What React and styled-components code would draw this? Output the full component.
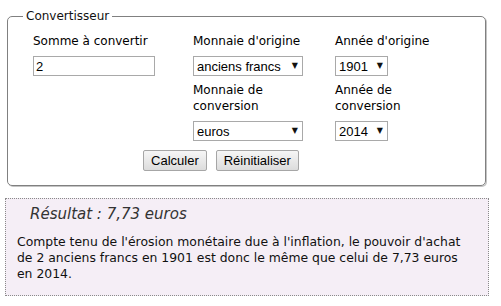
import React, { useState } from "react";
import styled, { createGlobalStyle } from "styled-components";

const GlobalStyle = createGlobalStyle`
  body {
    margin: 0;
    background: #fff;
    font-family: "DejaVu Sans", Verdana, sans-serif;
    font-size: 12px;
    color: #000;
  }
`;

const Page = styled.div`
  width: 484px;
  padding: 8px 0 0 5px;
`;

const Box = styled.fieldset`
  margin: 0 0 0 2px;
  width: 479px;
  box-sizing: border-box;
  border: 1px solid #808080;
  border-radius: 5px;
  box-shadow: 1px 1px 0 #c4c4c4;
  padding: 0 0 14px 15px;
`;

const Legend = styled.legend`
  padding: 0 3px;
  margin-left: 0;
  line-height: 16px;
  color: #111;
`;

const FormGrid = styled.div`
  display: grid;
  grid-template-columns: 160px 142px 74px;
  row-gap: 7px;
  margin: 9px 0 0 10px;
  width: 376px;
`;

const Label = styled.div`
  line-height: 16px;
  white-space: nowrap;
  margin-top: ${(p) => (p.$shift ? "-1px" : "0")};
  grid-column: ${(p) => p.$col};
`;

const TextInput = styled.input`
  box-sizing: border-box;
  width: 122px;
  height: 20px;
  border: 1px solid #a9a9a9;
  padding: 0 2px;
  font-family: "Liberation Sans", Arial, sans-serif;
  font-size: 13px;
  outline: none;
`;

const SelectWrap = styled.span`
  position: relative;
  display: inline-block;
  width: ${(p) => p.$w}px;
  height: 20px;
  grid-column: ${(p) => p.$col};

  &::after {
    content: "▼";
    position: absolute;
    right: 5px;
    top: 5px;
    font-size: 8px;
    line-height: 10px;
    color: #111;
    pointer-events: none;
  }
`;

const Select = styled.select`
  appearance: none;
  box-sizing: border-box;
  width: 100%;
  height: 100%;
  border: 1px solid #a9a9a9;
  border-radius: 0;
  background: #fff;
  padding: 0 0 0 3px;
  margin: 0;
  font-family: "Liberation Sans", Arial, sans-serif;
  font-size: 13px;
  color: #000;
  outline: none;
`;

const Buttons = styled.div`
  grid-column: 1 / 4;
  display: flex;
  justify-content: center;
  gap: 9px;
  margin-top: 2px;
`;

const Button = styled.button`
  height: 21px;
  padding: 0 7px;
  border: 1px solid #a6a6a6;
  border-radius: 2px;
  background: linear-gradient(#f6f6f6, #dcdcdc);
  font-family: "Liberation Sans", Arial, sans-serif;
  font-size: 13px;
  color: #000;
  cursor: pointer;
`;

const Result = styled.div`
  margin-top: 12px;
  width: 484px;
  box-sizing: border-box;
  border: 1px dotted #8a8a8a;
  background: #f5eef6;
  padding: 7px 14px 13px 11px;
`;

const ResultTitle = styled.div`
  font-style: italic;
  font-size: 15px;
  line-height: 17px;
  color: #333;
  margin: 0 0 11px 13px;
`;

const ResultText = styled.p`
  margin: 0;
  font-size: 12.4px;
  line-height: 16px;
  color: #111;
`;

export default function App() {
  const [amount, setAmount] = useState("2");
  const [from, setFrom] = useState("francs");
  const [to, setTo] = useState("euros");
  const [y1, setY1] = useState("1901");
  const [y2, setY2] = useState("2014");

  return (
    <Page>
      <GlobalStyle />
      <Box>
        <Legend>Convertisseur</Legend>
        <FormGrid>
          <Label $col={1}>Somme à convertir</Label>
          <Label $col={2}>Monnaie d'origine</Label>
          <Label $col={3}>Année d'origine</Label>

          <TextInput value={amount} onChange={(e) => setAmount(e.target.value)} />
          <SelectWrap $w={110} $col={2}>
            <Select value={from} onChange={(e) => setFrom(e.target.value)}>
              <option value="francs">anciens francs</option>
              <option value="nfrancs">francs</option>
              <option value="euros">euros</option>
            </Select>
          </SelectWrap>
          <SelectWrap $w={53} $col={3}>
            <Select value={y1} onChange={(e) => setY1(e.target.value)}>
              <option>1901</option>
              <option>1950</option>
              <option>2014</option>
            </Select>
          </SelectWrap>

          <Label $col={2} $shift>
            Monnaie de
            <br />
            conversion
          </Label>
          <Label $col={3} $shift>
            Année de
            <br />
            conversion
          </Label>

          <SelectWrap $w={110} $col={2}>
            <Select value={to} onChange={(e) => setTo(e.target.value)}>
              <option value="euros">euros</option>
              <option value="francs">anciens francs</option>
            </Select>
          </SelectWrap>
          <SelectWrap $w={53} $col={3}>
            <Select value={y2} onChange={(e) => setY2(e.target.value)}>
              <option>2014</option>
              <option>1901</option>
            </Select>
          </SelectWrap>

          <Buttons>
            <Button type="button">Calculer</Button>
            <Button type="button">Réinitialiser</Button>
          </Buttons>
        </FormGrid>
      </Box>

      <Result>
        <ResultTitle>Résultat : 7,73 euros</ResultTitle>
        <ResultText>
          Compte tenu de l'érosion monétaire due à l'inflation, le pouvoir d'achat de 2 anciens
          francs en 1901 est donc le même que celui de 7,73 euros en 2014.
        </ResultText>
      </Result>
    </Page>
  );
}
